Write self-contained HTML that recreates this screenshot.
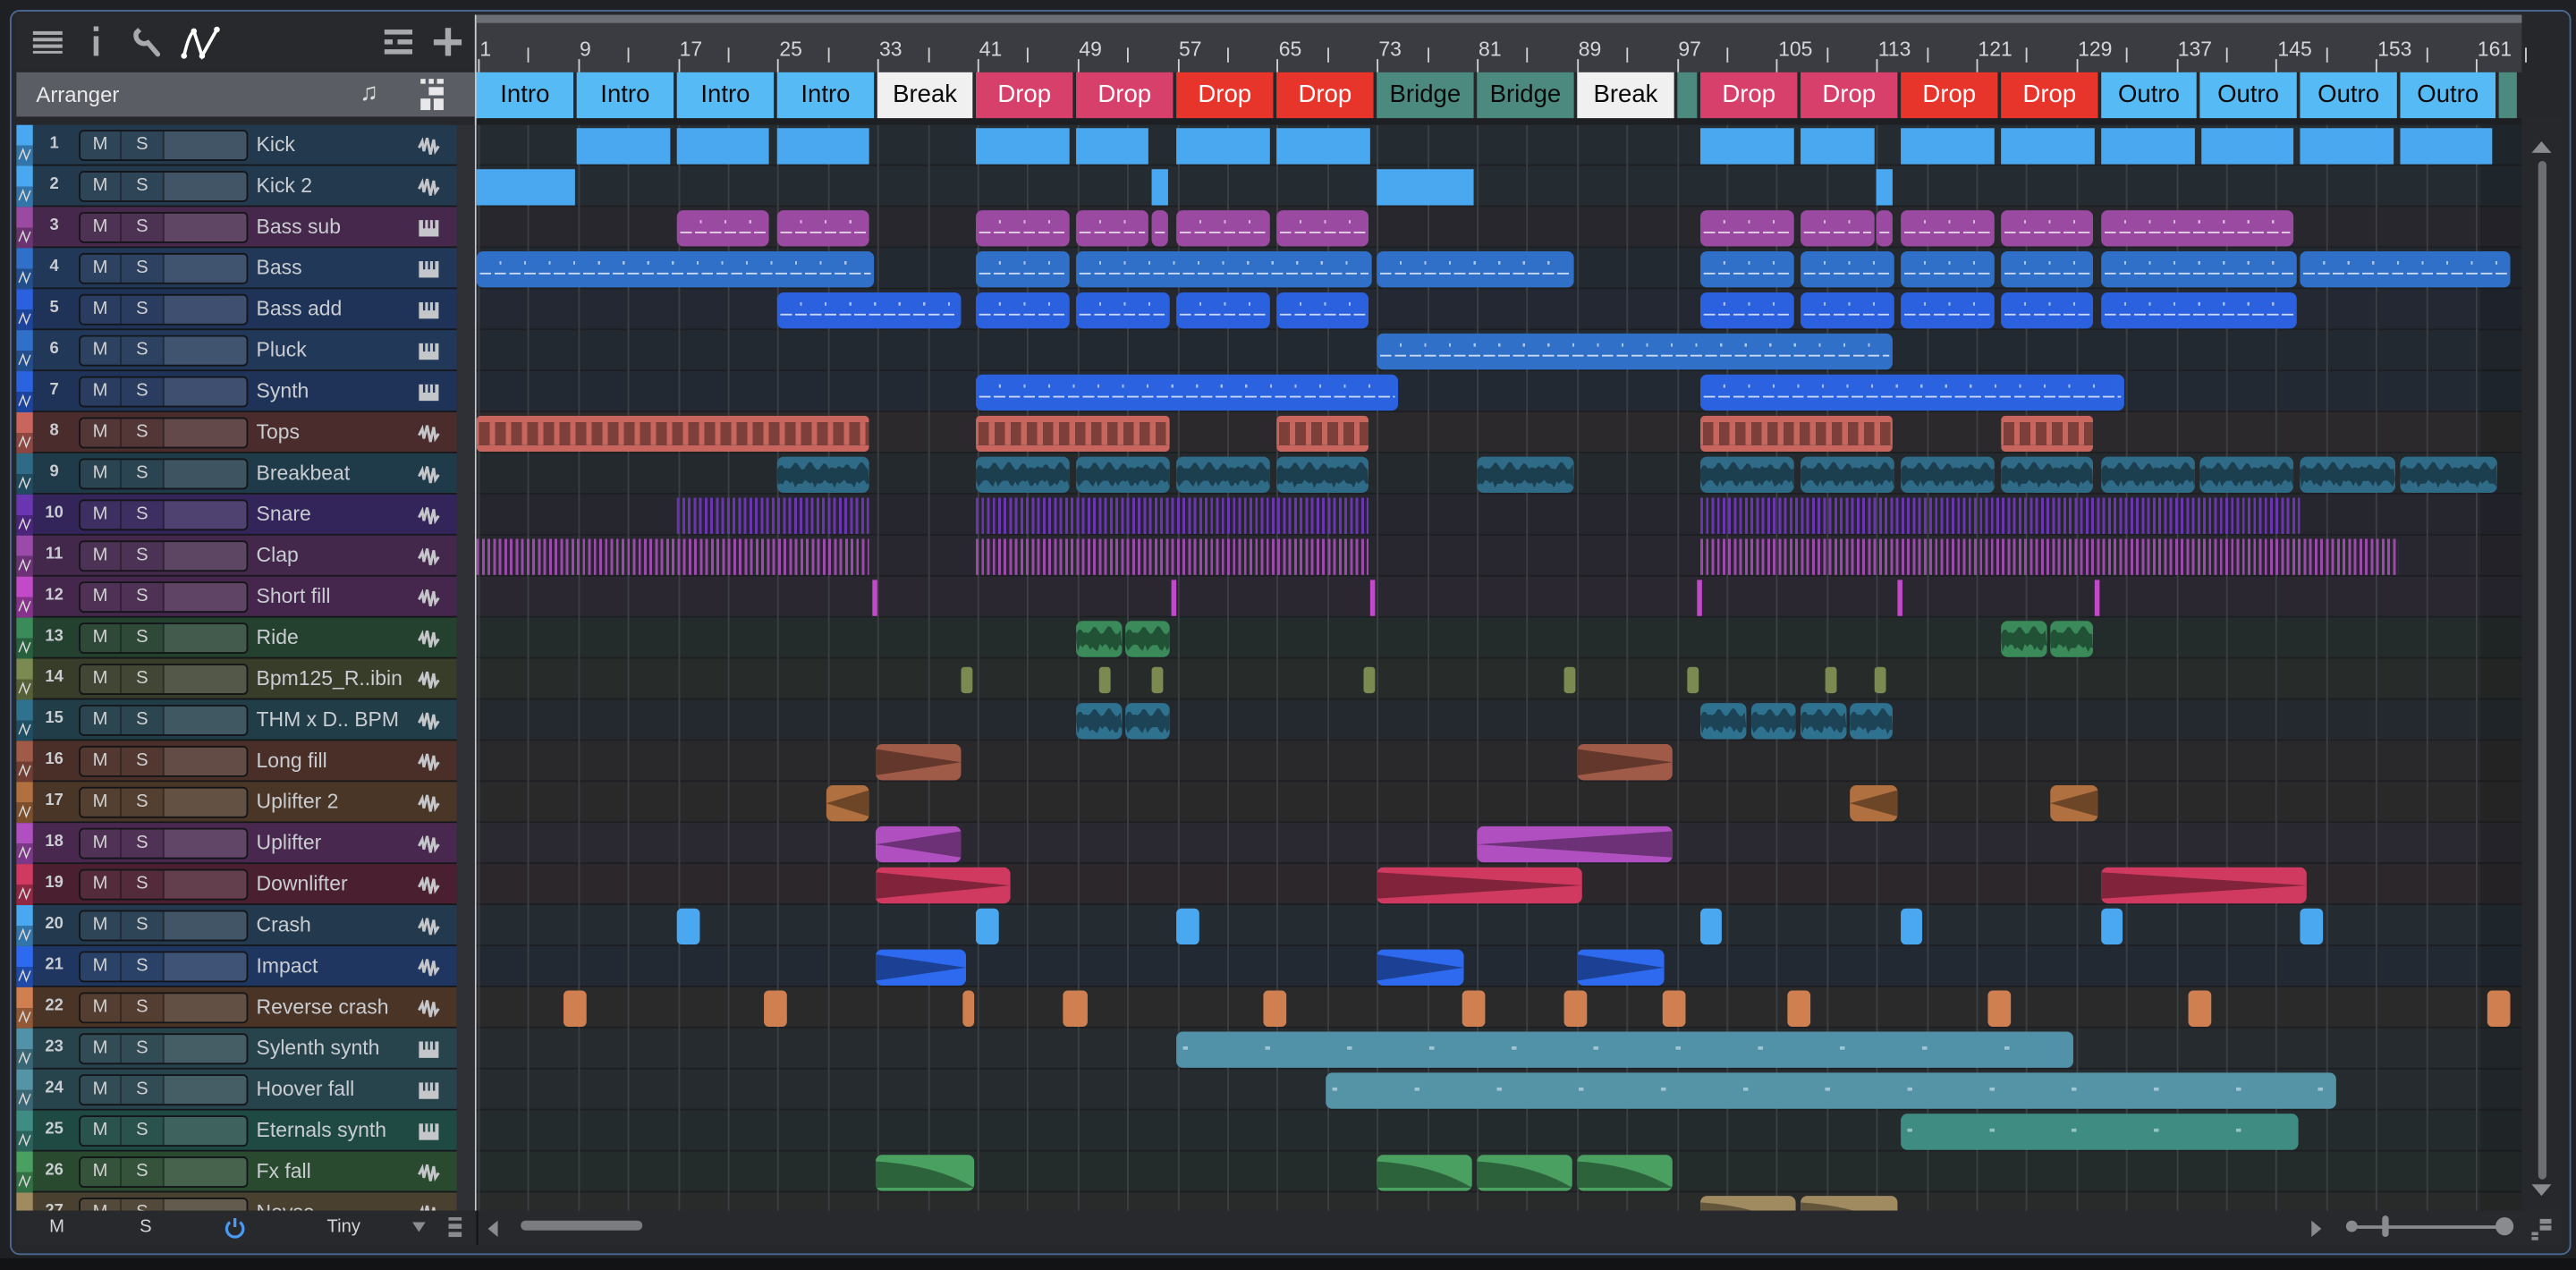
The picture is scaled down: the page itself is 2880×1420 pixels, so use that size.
<!DOCTYPE html>
<html><head><meta charset="utf-8">
<style>
*{margin:0;padding:0;box-sizing:border-box}
html,body{width:2880px;height:1420px;overflow:hidden;background:#1a1b1d}
#s{position:absolute;left:0;top:0;width:1568px;height:773px;transform:scale(1.836735);transform-origin:0 0;font-family:"Liberation Sans",sans-serif;background:#1f2023}
.a{position:absolute}
.win{left:6px;top:6px;width:1559px;height:758px;border:1.5px solid #4a6a94;border-radius:6px;background:#25272b}
.tb{left:10px;top:9px;width:279px;height:33px;background:#27292d}
.ah{left:10px;top:44px;width:279px;height:27px;background:#5a5d64;color:#e8e8ea;font-size:13px}
.rul{left:290px;top:9px;width:1245px;height:35px;background:#3a3c42}
.rul .top{position:absolute;left:0;top:0;width:100%;height:5px;background:#6b6e75}
.num{position:absolute;top:14px;font-size:12.5px;color:#d4d5d8}
.tick{position:absolute;top:20px;width:1px;height:9px;background:#d0d0d0}
.sec{position:absolute;top:44px;height:28px;font-size:15px;text-align:center;line-height:28px;color:#0a0a0a}
.trk{position:absolute;left:10px;width:268px;height:25px;border-bottom:1px solid #16171a}
.strip{position:absolute;left:0;top:0;width:10px;height:25px}
.nm{position:absolute;left:146px;top:5px;font-size:12.5px;color:#c9ccd1}
.no{position:absolute;left:12px;width:22px;text-align:center;top:6px;font-size:10px;font-weight:bold;color:#c9ccd1}
.ms{position:absolute;left:38px;top:3px;width:103px;height:19px;border:1px solid #141518;border-radius:3px;overflow:hidden;display:flex}
.ms div{height:100%;font-size:11px;color:#d0d0d0;text-align:center;line-height:17px;border-right:1px solid rgba(0,0,0,.35)}
.clip{position:absolute;overflow:hidden}
.bot{left:10px;top:737px;width:1525px;height:21px;background:#27292d;color:#d6d6d6;font-size:11px}
</style></head><body>
<div id="s">
<div class="a win"></div>
<div class="a" style="left:0;top:766px;width:1568px;height:7px;background:#121314"></div>
<div class="a tb">
 <svg class="a" style="left:10px;top:8px" width="20" height="16"><g fill="#a8a9ad"><rect x="0" y="2" width="18" height="2.2"/><rect x="0" y="6" width="18" height="2.2"/><rect x="0" y="10" width="18" height="2.2"/><rect x="0" y="14" width="18" height="1.6"/></g></svg>
 <svg class="a" style="left:45px;top:7px" width="8" height="20"><rect x="2" y="0" width="3" height="3" fill="#a8a9ad"/><rect x="2" y="6" width="3" height="12" fill="#a8a9ad"/></svg>
 <svg class="a" style="left:70px;top:7px" width="20" height="20"><path d="M3 4 A5 5 0 0 0 10 10 L16 17" stroke="#a8a9ad" stroke-width="3" fill="none" stroke-linecap="round"/><path d="M5 2 L3 4" stroke="#a8a9ad" stroke-width="3"/></svg>
 <svg class="a" style="left:100px;top:6px" width="26" height="22"><path d="M2 19 Q5 6 8 4 L13 19 L22 3" stroke="#fff" stroke-width="2" fill="none"/><circle cx="2" cy="19" r="1.8" fill="#fff"/><circle cx="8" cy="4" r="1.8" fill="#fff"/><circle cx="13" cy="19" r="1.8" fill="#fff"/><circle cx="22" cy="3" r="1.8" fill="#fff"/></svg>
 <svg class="a" style="left:223px;top:8px" width="20" height="18"><g fill="#a8a9ad"><rect x="1" y="1" width="17" height="3"/><rect x="1" y="7" width="5" height="3"/><rect x="9" y="7" width="9" height="3"/><rect x="1" y="13" width="17" height="3"/></g></svg>
 <svg class="a" style="left:253px;top:7px" width="20" height="20"><rect x="8" y="1" width="3.5" height="17" fill="#a8a9ad"/><rect x="1" y="8" width="17" height="3.5" fill="#a8a9ad"/></svg>
</div>
<div class="a" style="left:289px;top:9px;width:1.5px;height:728px;background:#c9cbd0"></div>
<div class="a ah"><span class="a" style="left:12px;top:6px">Arranger</span>
 <span class="a" style="left:209px;top:4px;font-size:15px;color:#ddd">♫</span>
 <svg class="a" style="left:245px;top:3px" width="18" height="22"><g fill="#e8e8ea"><rect x="1" y="1" width="3" height="3"/><rect x="6" y="1" width="3" height="3"/><rect x="11" y="1" width="4" height="3"/><rect x="6" y="6" width="9" height="5"/><rect x="1" y="13" width="6" height="7"/><rect x="9" y="13" width="6" height="7"/></g></svg>
</div>
<div class="a rul"><div class="top"></div><div id="rl"></div></div>
<div id="secs"></div>
<div class="a" style="left:290px;top:72px;width:1245px;height:4px;background:#1e1f22"></div>
<div id="tl" class="a" style="left:290px;top:76px;width:1245px;height:661px;overflow:hidden;background:#24272a"></div>
<div id="th" class="a" style="left:0;top:76px;width:290px;height:661px;overflow:hidden"><div class="a" style="left:278px;top:0;width:11px;height:661px;background:#2e3035"></div></div>
<div class="a" style="left:1535px;top:72px;width:24px;height:665px;background:#26282b"></div>
<svg class="a" style="left:1539px;top:83px" width="16" height="12"><path d="M2 10 L8 3 L14 10Z" fill="#8a8b8f"/></svg>
<div class="a" style="left:1545px;top:98px;width:5px;height:620px;border-radius:3px;background:#6d6e72"></div>
<svg class="a" style="left:1539px;top:719px" width="16" height="12"><path d="M2 2 L8 9 L14 2Z" fill="#8a8b8f"/></svg>
<div class="a bot">
 <span class="a" style="left:20px;top:4px">M</span>
 <span class="a" style="left:75px;top:4px">S</span>
 <svg class="a" style="left:126px;top:3px" width="14" height="14"><path d="M4 4 A5 5 0 1 0 10 4" stroke="#4a98f0" stroke-width="1.8" fill="none"/><line x1="7" y1="1.5" x2="7" y2="7" stroke="#4a98f0" stroke-width="1.8"/></svg>
 <span class="a" style="left:189px;top:4px">Tiny</span>
 <svg class="a" style="left:240px;top:6px" width="10" height="8"><path d="M1 1 L9 1 L5 7Z" fill="#8a8b8f"/></svg>
 <svg class="a" style="left:263px;top:3px" width="9" height="14"><g fill="#8a8b8f"><rect x="0" y="1" width="8" height="2"/><rect x="0" y="5" width="8" height="3"/><rect x="0" y="10" width="8" height="3"/></g></svg>
 <div class="a" style="left:280px;top:0;width:1px;height:21px;background:#111"></div>
 <svg class="a" style="left:286px;top:5px" width="8" height="12"><path d="M7 1 L1 6 L7 11Z" fill="#8a8b8f"/></svg>
 <div class="a" style="left:307px;top:6px;width:74px;height:6px;border-radius:3px;background:#7b7c80"></div>
 <svg class="a" style="left:1396px;top:5px" width="8" height="12"><path d="M1 1 L7 6 L1 11Z" fill="#8a8b8f"/></svg>
 <div class="a" style="left:1420px;top:9px;width:95px;height:2px;background:#8a8b8f"></div>
 <div class="a" style="left:1418px;top:6px;width:7px;height:7px;border-radius:50%;background:#8a8b8f"></div>
 <div class="a" style="left:1440px;top:3px;width:4px;height:13px;border-radius:2px;background:#8a8b8f"></div>
 <div class="a" style="left:1509px;top:4px;width:11px;height:11px;border-radius:50%;background:#8a8b8f"></div>
</div>
<div class="a" style="left:1535px;top:737px;width:24px;height:21px;background:#27292d"></div>
<svg class="a" style="left:1540px;top:741px" width="14" height="16"><g fill="#8a8b8f"><rect x="6" y="1" width="7" height="3"/><rect x="6" y="5" width="7" height="3"/><rect x="1" y="9" width="4" height="2"/><rect x="1" y="12" width="4" height="2"/></g></svg>
</div>
<script>
const R=(s,t)=>{const d=document.createElement('div');d.className=s;if(t)d.textContent=t;return d};
const rl=document.getElementById('rl');
for(let n=1;n<=161;n+=8){const x=1+(n-1)*7.6;const l=R('num',''+n);l.style.left=(x+1)+'px';rl.appendChild(l);}
for(let n=1;n<=165;n+=4){const x=1+(n-1)*7.6;if(n%8==1)continue;const t=R('tick');t.style.left=x+'px';rl.appendChild(t);}
for(let n=1;n<=161;n+=8){const x=1+(n-1)*7.6;const t=R('tick');t.style.left=x+'px';t.style.top='27px';t.style.height='8px';rl.appendChild(t);}
const S=[['Intro',290,349,'#56baf5'],['Intro',351,410,'#56baf5'],['Intro',412,471,'#56baf5'],['Intro',473,532,'#56baf5'],['Break',534,592,'#f0f0f0'],['Drop',594,653,'#d6406a'],['Drop',655,714,'#d6406a'],['Drop',716,775,'#e8352b'],['Drop',777,836,'#e8352b'],['Bridge',838,897,'#4c8a80'],['Bridge',899,958,'#4c8a80'],['Break',960,1019,'#f0f0f0'],['',1021,1033,'#4c8a80'],['Drop',1035,1094,'#d6406a'],['Drop',1096,1155,'#d6406a'],['Drop',1157,1216,'#e8352b'],['Drop',1218,1277,'#e8352b'],['Outro',1279,1337,'#56baf5'],['Outro',1339,1398,'#56baf5'],['Outro',1400,1459,'#56baf5'],['Outro',1461,1519,'#56baf5'],['',1521,1532,'#4c8a80']];
const sc=document.getElementById('secs');
S.forEach(s=>{const d=R('sec',s[0]);d.style.left=s[1]+'px';d.style.width=(s[2]-s[1])+'px';d.style.background=s[3];if(s[3]=='#d6406a'||s[3]=='#e8352b')d.style.color='#fff';sc.appendChild(d);});
const T=[
['Kick','#4aa8f0','#233a4e','w','sq',[[351,408],[412,468],[473,529],[594,651],[655,699],[716,773],[777,834],[1035,1092],[1096,1141],[1157,1214],[1218,1275],[1279,1336],[1340,1396],[1400,1457],[1461,1517]]],
['Kick 2','#4aa8f0','#233a4e','w','sq',[[290,350],[701,711],[838,897],[1142,1152]]],
['Bass sub','#9a4aa0','#45284b','k','midi',[[412,468],[473,529],[594,651],[655,699],[701,711],[716,773],[777,833],[1035,1092],[1096,1141],[1142,1152],[1157,1214],[1218,1274],[1279,1396]]],
['Bass','#3170c8','#213858','k','midi',[[290,532],[594,651],[655,835],[838,958],[1035,1092],[1096,1153],[1157,1214],[1218,1274],[1279,1398],[1400,1528]]],
['Bass add','#2b61de','#1f3358','k','midi',[[473,585],[594,651],[655,712],[716,773],[777,833],[1035,1092],[1096,1153],[1157,1214],[1218,1274],[1279,1398]]],
['Pluck','#3170c8','#213858','k','midi',[[838,1152]]],
['Synth','#2a62e0','#1f3358','k','midi',[[594,851],[1035,1293]]],
['Tops','#c8665e','#4a2c2c','w','tops',[[290,529],[594,712],[777,833],[1035,1152],[1218,1274]]],
['Breakbeat','#2f6a86','#1f3a48','w','aud',[[473,529],[594,651],[655,712],[716,773],[777,833],[899,958],[1035,1092],[1096,1153],[1157,1214],[1218,1274],[1279,1336],[1339,1396],[1400,1458],[1461,1520]]],
['Snare','#6a36b0','#33245a','w','bars',[[412,529],[594,833],[1035,1400]]],
['Clap','#9a4aa8','#43284b','w','bars',[[290,529],[594,833],[1035,1460]]],
['Short fill','#c04ac8','#45264c','w','thin',[[531,534],[713,716],[834,837],[1033,1036],[1155,1158],[1275,1278]]],
['Ride','#3a8a5a','#24402f','w','aud',[[655,683],[685,712],[1218,1246],[1248,1274]]],
['Bpm125_R..ibin','#7a8a50','#383d2a','w','tiny',[[585,592],[669,676],[701,708],[830,837],[952,959],[1027,1034],[1111,1118],[1141,1148]]],
['THM x D.. BPM','#2f7290','#213d48','w','aud',[[655,683],[685,712],[1035,1063],[1066,1093],[1096,1124],[1126,1152]]],
['Long fill','#a05a48','#4a2e28','w','fxd',[[533,585],[960,1018]]],
['Uplifter 2','#b07040','#4a3626','w','fxu',[[503,529],[1126,1155],[1248,1277]]],
['Uplifter','#b050c0','#48284e','w','fxu',[[533,585],[899,1018]]],
['Downlifter','#d03a60','#4a2030','w','fxd',[[533,615],[838,963],[1279,1404]]],
['Crash','#4aa8f0','#233a4e','w','r',[[412,426],[594,608],[716,730],[1035,1048],[1157,1170],[1279,1292],[1400,1414]]],
['Impact','#2e6af0','#1f3760','w','fxd',[[533,588],[838,891],[960,1013]]],
['Reverse crash','#d08050','#4a3426','w','r',[[343,357],[465,479],[586,593],[647,662],[769,783],[890,904],[952,966],[1012,1026],[1088,1102],[1210,1224],[1332,1346],[1514,1528]]],
['Sylenth synth','#5292a8','#27434c','k','midis',[[716,1262]]],
['Hoover fall','#5594a6','#27434c','k','midis',[[807,1422]]],
['Eternals synth','#3e8c82','#1f4a44','k','midis',[[1157,1399]]],
['Fx fall','#4aa060','#2a4a30','w','fxf',[[533,593],[838,896],[899,957],[960,1018]]],
['Noyse','#a08a60','#4a4030','w','fxf',[[1035,1093],[1096,1155]]]
];
const tl=document.getElementById('tl'),th=document.getElementById('th');
function dk(h,f){const n=parseInt(h.slice(1),16);let r=n>>16,g=(n>>8)&255,b=n&255;return `rgb(${r*f|0},${g*f|0},${b*f|0})`}
function mix(h,a){const n=parseInt(h.slice(1),16);let r=n>>16,g=(n>>8)&255,b=n&255;return `rgb(${(35*(1-a)+r*a)|0},${(38*(1-a)+g*a)|0},${(41*(1-a)+b*a)|0})`}
T.forEach((t,i)=>{
 const y=i*25;
 const h=R('trk');h.style.top=y+'px';h.style.background=t[2];
 const st=R('strip');st.style.background=`linear-gradient(${t[1]} 0 50%, ${dk(t[1],0.7)} 50%)`;h.appendChild(st);
 st.innerHTML='<svg width="10" height="25"><path d="M1.5 21 L4 15 L6 21 L8.5 15" stroke="#d8d8d8" stroke-width="0.8" fill="none"/></svg>';
 h.appendChild(R('no',''+(i+1)));
 const ms=R('ms');ms.style.background=t[2];
 ms.innerHTML=`<div style="width:25px;background:rgba(255,255,255,.05)">M</div><div style="width:26px;background:rgba(255,255,255,.05)">S</div><div style="flex:1;background:rgba(255,255,255,.14);border:0"></div>`;
 h.appendChild(ms);
 h.appendChild(R('nm',t[0]));
 const ic=document.createElement('div');ic.className='a';ic.style.left='244px';ic.style.top='6px';
 ic.innerHTML=t[3]=='k'?'<svg width="14" height="12"><rect x="1" y="1" width="12" height="10" fill="#c4c6ca"/><g fill="'+t[2]+'"><rect x="3.5" y="1" width="1.3" height="5"/><rect x="6.5" y="1" width="1.3" height="5"/><rect x="9.5" y="1" width="1.3" height="5"/></g></svg>':'<svg width="14" height="12"><path d="M1 7 L3 3 L4 9 L6 1 L8 11 L10 2 L11 9 L13 6" stroke="#c4c6ca" stroke-width="1.6" fill="none"/></svg>';
 h.appendChild(ic);
 th.appendChild(h);
 const ln=document.createElement('div');ln.className='a';ln.style.cssText=`left:0;top:${y}px;width:1245px;height:25px;background:${mix(t[1],0.05)};border-bottom:1px solid #1d1f22`;
 tl.appendChild(ln);
});
for(let k=0;k<42;k++){const g=document.createElement('div');g.className='a';g.style.cssText=`left:${1+k*30.4}px;top:0;width:1px;height:661px;background:#3c3f44`;tl.appendChild(g);}
const shade=document.createElement('div');shade.className='a';shade.style.cssText='left:1220px;top:0;width:25px;height:661px;background:rgba(0,0,0,.12)';tl.appendChild(shade);
function wave(w,c){let p='M0 11';for(let x=0;x<=w;x+=1.5){const a=3+Math.abs(Math.sin(x*1.7)*Math.cos(x*.31))*5;p+=` L${x} ${11-a}`;}for(let x=w;x>=0;x-=1.5){const a=3+Math.abs(Math.sin(x*1.3)*Math.cos(x*.27))*5;p+=` L${x} ${11+a}`;}return `<svg class="a" style="left:0;top:0" width="${w}" height="22"><path d="${p}Z" fill="${c}"/></svg>`;}
T.forEach((t,i)=>{
 const y=i*25+1,ty=t[4],c=t[1];
 t[5].forEach(([a,b])=>{
  const d=R('clip');const x=a-290,w=b-a;d.style.left=x+'px';d.style.top=(y+1)+'px';d.style.width=w+'px';d.style.height='22px';
  if(ty=='sq'){d.style.background=c;}
  else if(ty=='midi'){d.style.background=c;d.style.borderRadius='4px';d.innerHTML='<div class="a" style="left:2px;right:2px;top:13px;height:1px;background:repeating-linear-gradient(90deg,rgba(255,255,255,.75) 0 7px,transparent 7px 9px)"></div><div class="a" style="left:14px;right:4px;top:6px;height:2px;background:repeating-linear-gradient(90deg,rgba(255,255,255,.6) 0 1.2px,transparent 1.2px 15px)"></div>';}
  else if(ty=='midis'){d.style.background=c;d.style.borderRadius='4px';d.innerHTML='<div class="a" style="left:4px;right:4px;top:9px;height:2px;background:repeating-linear-gradient(90deg,rgba(220,240,245,.55) 0 3px,transparent 3px 50px)"></div>';}
  else if(ty=='tops'){d.style.background=`repeating-linear-gradient(90deg,${c} 0 1.5px,${dk(c,0.62)} 1.5px 8px,${c} 8px 9.8px)`;d.style.borderTop='4px solid '+c;d.style.borderBottom='4px solid '+c;d.style.borderRadius='3px';}
  else if(ty=='aud'){d.style.background=c;d.style.borderRadius='4px';d.innerHTML=wave(w,dk(c,0.6));}
  else if(ty=='bars'){d.style.background=`repeating-linear-gradient(90deg,${c} 0 1.6px,transparent 1.6px 3.4px)`;}
  else if(ty=='thin'){d.style.background=c;}
  else if(ty=='tiny'){d.style.background=c;d.style.borderRadius='2px';d.style.top=(y+4)+'px';d.style.height='16px';}
  else if(ty=='r'){d.style.background=c;d.style.borderRadius='3px';}
  else{d.style.background=c;d.style.borderRadius='4px';
   const p=ty=='fxd'?'M0 3 L100 11 L0 19Z':ty=='fxu'?'M0 11 L100 3 L100 19Z':'M0 4 Q60 6 100 20 L0 20Z';
   d.innerHTML=`<svg class="a" style="left:0;top:0" width="${w}" height="22" preserveAspectRatio="none" viewBox="0 0 100 22"><path d="${p}" fill="${dk(c,0.62)}"/></svg>`;}
  tl.appendChild(d);
 });
});
</script>
</body></html>
